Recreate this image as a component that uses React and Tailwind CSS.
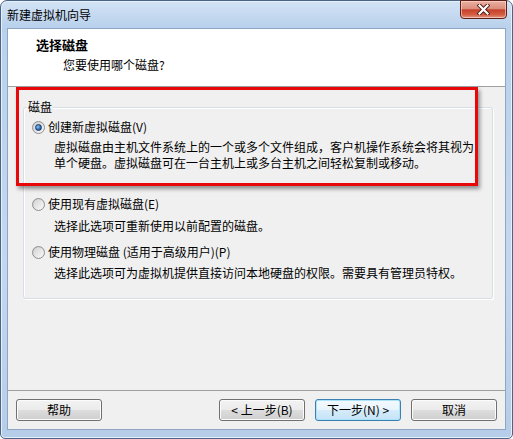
import React from 'react';

function Radio({ checked, label }) {
  return (
    <div className="flex items-center h-[14px] leading-[14px]">
      <span className="relative w-[13px] h-[13px] shrink-0 rounded-full border border-[#8e8f8f] bg-[linear-gradient(135deg,#c8c8c8,#fbfbfb)] flex items-center justify-center">
        <span className="w-[9px] h-[9px] rounded-full bg-[linear-gradient(135deg,#d6d6d6,#f6f6f6)]" />
        {checked && (
          <span className="absolute w-[7px] h-[7px] rounded-full border border-[#14386a] bg-[radial-gradient(circle_at_35%_35%,#8ec3f0,#2c6bb0_60%,#173f75)]" />
        )}
      </span>
      <span className="ml-[3px] whitespace-nowrap">{label}</span>
    </div>
  );
}

function WinButton({ children, focused }) {
  return (
    <button
      className={`w-[86px] h-[22px] rounded-[3px] border text-[12px] leading-[20px] text-black ${
        focused
          ? 'border-[#3c7fb1] bg-[linear-gradient(#f4fafe,#e8f4fc_50%,#d6ecfa_50%,#c6e3f7)] shadow-[inset_0_0_0_1px_#a9e4f9]'
          : 'border-[#707070] bg-[linear-gradient(#f2f2f2,#ebebeb_50%,#dddddd_50%,#cfcfcf)] shadow-[inset_0_0_0_1px_#fcfcfc]'
      }`}
    >
      {children}
    </button>
  );
}

export default function App() {
  return (
    <div className="w-[513px] h-[439px] font-['Noto_Sans_CJK_SC','Noto_Sans',sans-serif] text-[12px] text-black">
      {/* Window frame */}
      <div className="w-full h-full flex flex-col rounded-t-[7px] rounded-b-[5px] border border-[#4b6586] bg-[linear-gradient(180deg,#d3e3f5,#b9d1ec_26px,#c3d8f0_60%,#b6cde9)] shadow-[inset_0_0_0_1px_#e6f0fb]">
        {/* Title bar */}
        <div className="h-[27px] flex items-start justify-between pl-[6px] pr-[5px]">
          <span className="mt-[6px] leading-[16px] whitespace-nowrap">新建虚拟机向导</span>
          <div className="-mt-[1px] w-[47px] h-[19px] rounded-b-[4px] border border-[#5a2018] bg-[linear-gradient(#eab0a2,#dc8e7c_45%,#c6412b_52%,#d35c41_80%,#e49a85)] shadow-[inset_0_0_0_1px_rgba(255,220,210,0.6)] flex items-center justify-center">
            <svg width="13" height="11" viewBox="0 0 13 11">
              <path d="M2.5 1.5 L10.5 9.5 M10.5 1.5 L2.5 9.5" stroke="#4a1a12" strokeWidth="4" strokeLinecap="square" />
              <path d="M2.5 1.5 L10.5 9.5 M10.5 1.5 L2.5 9.5" stroke="#ffffff" strokeWidth="2.2" strokeLinecap="square" />
            </svg>
          </div>
        </div>

        {/* Client area */}
        <div className="mx-[6px] mb-[8px] flex-1 flex flex-col border border-[#8ea6c4] bg-[#f0f0f0]">
          {/* Header */}
          <div className="h-[58px] bg-white border-b border-[#a0a0a0] pt-[8px]">
            <div className="ml-[28px] h-[16px] leading-[16px] text-[13px] font-bold">选择磁盘</div>
            <div className="ml-[55px] mt-[5px] h-[14px] leading-[14px]">您要使用哪个磁盘?</div>
          </div>

          {/* Body */}
          <div className="relative flex-1 pt-[20px] pl-[15px]">
            <div className="relative w-[470px] h-[192px] border border-[#d5dfe5] rounded-[3px] shadow-[inset_1px_1px_0_#ffffff,1px_1px_0_#ffffff] pl-[8px]">
              <span className="absolute -top-[8px] left-[3px] h-[14px] leading-[14px] px-[1px] bg-[#f0f0f0]">磁盘</span>

              <div className="mt-[12px]">
                <Radio checked label="创建新虚拟磁盘(V)" />
              </div>
              <div className="mt-[5px] ml-[22px] leading-[16px] whitespace-nowrap">
                <div>虚拟磁盘由主机文件系统上的一个或多个文件组成，客户机操作系统会将其视为</div>
                <div>单个硬盘。虚拟磁盘可在一台主机上或多台主机之间轻松复制或移动。</div>
              </div>

              <div className="mt-[26px]">
                <Radio label="使用现有虚拟磁盘(E)" />
              </div>
              <div className="mt-[8px] ml-[22px] leading-[14px] whitespace-nowrap">
                选择此选项可重新使用以前配置的磁盘。
              </div>

              <div className="mt-[12px]">
                <Radio label="使用物理磁盘 (适用于高级用户)(P)" />
              </div>
              <div className="mt-[7px] ml-[22px] leading-[14px] whitespace-nowrap">
                选择此选项可为虚拟机提供直接访问本地硬盘的权限。需要具有管理员特权。
              </div>
            </div>

            {/* Red annotation box */}
            <div className="absolute left-[8px] top-0 w-[462px] h-[99px] border-[3px] border-[#e8080a] shadow-[2px_3px_4px_rgba(0,0,0,0.4)] pointer-events-none" />
          </div>

          {/* Footer */}
          <div className="h-[39px] border-t border-[#a0a0a0] pt-[8px] px-[8px] flex items-start">
            <WinButton>帮助</WinButton>
            <div className="flex-1" />
            <WinButton>&lt; 上一步(B)</WinButton>
            <div className="w-[10px]" />
            <WinButton focused>下一步(N) &gt;</WinButton>
            <div className="w-[10px]" />
            <WinButton>取消</WinButton>
          </div>
        </div>
      </div>
    </div>
  );
}
